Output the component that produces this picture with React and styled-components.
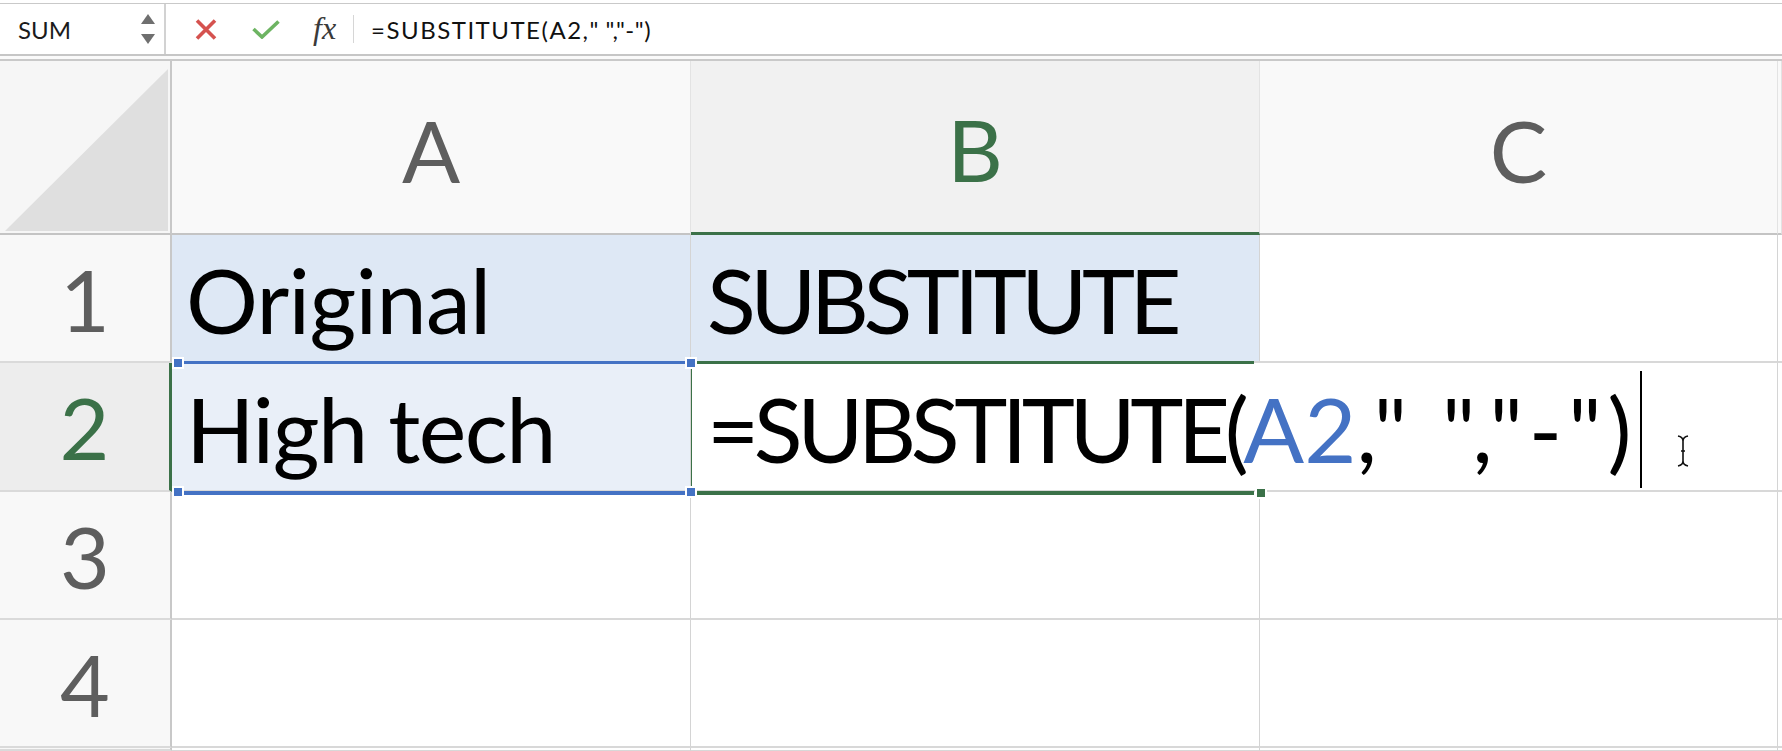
import React from 'react';
import styled, { createGlobalStyle } from 'styled-components';

const GlobalStyle = createGlobalStyle`
  html, body {
    margin: 0;
    padding: 0;
    background: #fff;
  }
  body {
    font-family: Lato, "Open Sans", sans-serif;
    overflow: hidden;
  }
`;

const green = '#3b7148';
const blue = '#4472c4';

const Page = styled.div`
  width: 1782px;
  height: 751px;
  overflow: hidden;
  background: #fff;
  display: flex;
  flex-direction: column;
`;

const FormulaBar = styled.div`
  flex-shrink: 0;
  display: flex;
  align-items: stretch;
  height: 50px;
  margin-top: 3px;
  border-top: 1px solid #c9c9c9;
  border-bottom: 2px solid #c6c6c6;
`;

const NameBox = styled.div`
  width: 166px;
  display: flex;
  align-items: center;
  justify-content: space-between;
  padding: 0 9px 0 18px;
  box-sizing: border-box;
  border-right: 2px solid #d2d2d2;
  font-size: 24px;
  color: #1b1b1b;
`;

const Spinner = styled.div`
  display: flex;
  flex-direction: column;
  gap: 10px;
`;

const Arrow = styled.div`
  width: 0;
  height: 0;
  border-left: 7px solid transparent;
  border-right: 7px solid transparent;
  ${p => (p.down ? 'border-top' : 'border-bottom')}: 10px solid #6f6f6f;
`;

const Controls = styled.div`
  display: flex;
  align-items: center;
  padding-left: 29px;
`;

const IconButton = styled.span`
  display: flex;
  align-items: center;
  margin-right: ${p => p.gap || 0}px;
`;

const Fx = styled.span`
  font-family: "Liberation Serif", "DejaVu Serif", serif;
  font-style: italic;
  font-size: 32px;
  color: #3a3a3a;
  margin-right: 17px;
  line-height: 1;
  padding-bottom: 2px;
`;

const Divider = styled.span`
  width: 1px;
  height: 28px;
  background: #d6d6d6;
  margin-right: 17px;
`;

const FormulaText = styled.span`
  font-size: 24px;
  color: #111;
  white-space: nowrap;
`;

const Squeeze = styled.span`
  letter-spacing: ${p => p.spacing}px;
`;

const Gap = styled.div`
  flex-shrink: 0;
  height: 3px;
  background: #fafafa;
`;

const Grid = styled.div`
  display: grid;
  grid-template-columns: 172px 519px 569px 518px minmax(0, 1fr);
  grid-template-rows: 174px 128px 129px 128px 128px minmax(0, 1fr);
  border-top: 2px solid #c9c9c9;
  flex: 1;
  min-height: 0;
`;

const Corner = styled.div`
  background: #f6f6f6;
  border-right: 2px solid #c8c8c8;
  border-bottom: 2px solid #c4c4c4;
  display: flex;
  align-items: flex-end;
  justify-content: flex-end;
  padding: 0 2px 2px 0;
`;

const ColHeader = styled.div`
  background: ${p => (p.selected ? '#f1f1f1' : '#f9f9f9')};
  border-right: 1px solid #e3e3e3;
  border-bottom: ${p => (p.selected ? `3px solid ${green}` : '2px solid #c4c4c4')};
  display: flex;
  align-items: center;
  justify-content: center;
  padding-top: 4px;
  box-sizing: border-box;
  font-size: 86px;
  color: ${p => (p.selected ? green : '#5e5e5e')};
`;

const RowHeader = styled.div`
  background: ${p => (p.selected ? '#ededed' : '#f8f8f8')};
  border-right: ${p => (p.selected ? `3px solid ${green}` : '2px solid #c8c8c8')};
  border-bottom: 2px solid #dadada;
  display: flex;
  align-items: center;
  justify-content: center;
  padding-top: 0;
  box-sizing: border-box;
  font-size: 86px;
  color: ${p => (p.selected ? green : '#5e5e5e')};
  overflow: hidden;
`;

const Cell = styled.div`
  position: relative;
  background: ${p => p.fill || '#fff'};
  border-right: ${p => (p.open ? 'none' : '1px solid #d4d4d4')};
  border-bottom: 2px solid #d8d8d8;
  display: flex;
  align-items: center;
  padding: 2px 0 0 ${p => p.pad || 14}px;
  box-sizing: border-box;
  font-size: 90px;
  letter-spacing: ${p => p.spacing || 0}px;
  color: #000;
  white-space: nowrap;
  z-index: ${p => p.z || 0};
`;

const RefFrame = styled.div`
  position: absolute;
  left: 2px;
  right: -2px;
  top: -2px;
  bottom: -5px;
  border-top: 3px solid ${blue};
  border-bottom: 4px solid ${blue};
  pointer-events: none;
`;

const ActiveFrame = styled.div`
  position: absolute;
  left: -2px;
  right: 6px;
  top: -2px;
  bottom: -5px;
  border-top: 3px solid ${green};
  border-left: 3px solid ${green};
  border-bottom: 4px solid ${green};
  pointer-events: none;
`;

const Handle = styled.div`
  position: absolute;
  width: 8px;
  height: 8px;
  background: ${p => p.color};
  border: 2px solid #fff;
  z-index: 3;
  ${p => (p.top !== undefined ? `top: ${p.top}px;` : '')}
  ${p => (p.bottom !== undefined ? `bottom: ${p.bottom}px;` : '')}
  ${p => (p.left !== undefined ? `left: ${p.left}px;` : '')}
  ${p => (p.right !== undefined ? `right: ${p.right}px;` : '')}
`;

const Ref = styled.span`
  color: ${blue};
`;

const Caret = styled.span`
  display: block;
  flex-shrink: 0;
  width: 2px;
  height: 117px;
  background: #000;
  margin-left: 2px;
  position: relative;
  top: 2px;
`;

const Pointer = styled.svg`
  position: absolute;
  left: 416px;
  top: 72px;
`;

const XIcon = () => (
  <svg width="22" height="21" viewBox="0 0 22 21">
    <path d="M2 1.5 L20 19.5 M20 1.5 L2 19.5" stroke="#d5524f" strokeWidth="3.6" fill="none" />
  </svg>
);

const CheckIcon = () => (
  <svg width="28" height="19" viewBox="0 0 28 19">
    <path d="M1.5 9 L10 17 L26.5 1.5" stroke="#6db462" strokeWidth="3.6" fill="none" />
  </svg>
);

const App = () => {
  return (
    <Page>
      <GlobalStyle />
      <FormulaBar>
        <NameBox>
          <span>SUM</span>
          <Spinner>
            <Arrow />
            <Arrow down />
          </Spinner>
        </NameBox>
        <Controls>
          <IconButton gap={35}><XIcon /></IconButton>
          <IconButton gap={33}><CheckIcon /></IconButton>
          <Fx>fx</Fx>
          <Divider />
          <FormulaText>
            <Squeeze spacing={1.5}>=SUBSTITUTE(A2,</Squeeze>
            <Squeeze spacing={0.5}>" ","-")</Squeeze>
          </FormulaText>
        </Controls>
      </FormulaBar>
      <Gap />
      <Grid>
        <Corner>
          <svg width="163" height="162" viewBox="0 0 163 162">
            <polygon points="0,162 163,162 163,0" fill="#dfdfdf" />
          </svg>
        </Corner>
        <ColHeader>A</ColHeader>
        <ColHeader selected>B</ColHeader>
        <ColHeader>C</ColHeader>
        <ColHeader />

        <RowHeader>1</RowHeader>
        <Cell fill="#dee8f5" spacing={-0.7}>Original</Cell>
        <Cell fill="#dee8f5" pad={16} spacing={-5.6}>SUBSTITUTE</Cell>
        <Cell />
        <Cell />

        <RowHeader selected>2</RowHeader>
        <Cell fill="#e9eff8" z={2} spacing={-1.5}>
          High tech
          <RefFrame />
          <Handle color={blue} top={-6} left={0} />
          <Handle color={blue} top={-6} right={-7} />
          <Handle color={blue} bottom={-8} left={0} />
          <Handle color={blue} bottom={-8} right={-7} />
        </Cell>
        <Cell open pad={16} z={1}>
          <Squeeze spacing={-5.4}>=SUBSTITUTE(</Squeeze>
          <Ref>A2</Ref>
          <Squeeze spacing={6}>," ","-")</Squeeze>
          <Caret />
          <ActiveFrame />
          <Handle color={green} bottom={-9} right={-7} />
        </Cell>
        <Cell>
          <Pointer width="14" height="32" viewBox="0 0 14 32">
            <path d="M2 1 Q7 2 7 6 L7 26 Q7 30 2 31 M12 1 Q7 2 7 6 M7 26 Q7 30 12 31 M5 16 L9 16" stroke="#111" strokeWidth="1.6" fill="none" />
          </Pointer>
        </Cell>
        <Cell />

        <RowHeader>3</RowHeader>
        <Cell />
        <Cell />
        <Cell />
        <Cell />

        <RowHeader>4</RowHeader>
        <Cell />
        <Cell />
        <Cell />
        <Cell />

        <RowHeader />
        <Cell />
        <Cell />
        <Cell />
        <Cell />
      </Grid>
    </Page>
  );
};

export default App;
